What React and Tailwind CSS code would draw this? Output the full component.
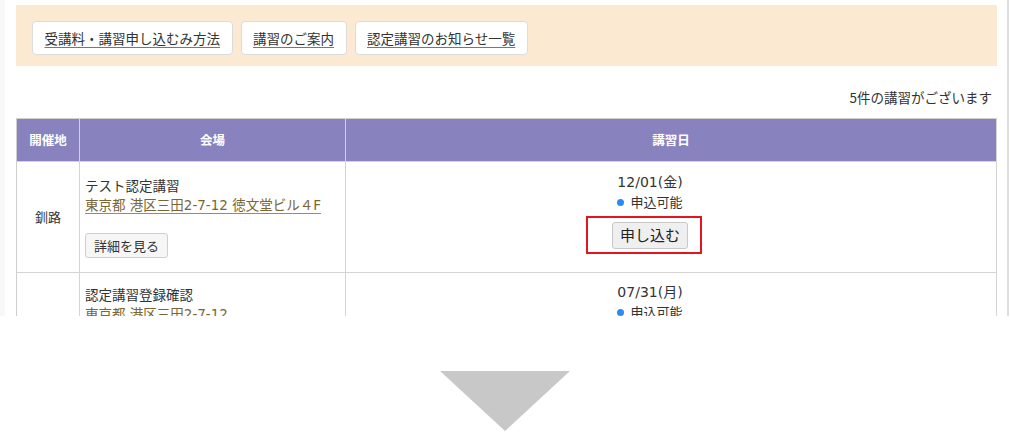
import React from "react";

const font = { fontFamily: '"Noto Sans CJK JP", "Noto Sans", sans-serif' };
const latinWide = { fontFamily: '"DejaVu Sans", "Noto Sans CJK JP", sans-serif' };

function TopButton({ children }) {
  return (
    <div className="h-[34px] px-[11.5px] flex items-center bg-white border border-[#dcdcdc] rounded-[4px] text-[13.5px] text-[#333] underline decoration-[#777] underline-offset-[3px]">
      {children}
    </div>
  );
}

function Status() {
  return (
    <div className="h-[20px] flex items-center justify-center gap-[6px] text-[13px] text-[#333]">
      <span className="w-[7px] h-[7px] rounded-full bg-[#2a8cf0]" />
      <span>申込可能</span>
    </div>
  );
}

export default function App() {
  return (
    <div className="w-[1010px] h-[448px] bg-white overflow-hidden" style={font}>
      <div className="h-[316px] flex overflow-hidden">
        <div className="w-[5px] shrink-0 bg-[#f8f8f8]" />
        <div className="w-[992px] shrink-0 pl-[11px]">
          <div className="mt-[5px] h-[61px] bg-[#fce9d2] flex items-start pt-[16px] pl-[16px] gap-[8px]">
            <TopButton>受講料・講習申し込むみ方法</TopButton>
            <TopButton>講習のご案内</TopButton>
            <TopButton>認定講習のお知らせ一覧</TopButton>
          </div>
          <div className="mt-[21px] h-[20px] leading-[20px] text-right pr-[5px] text-[13.5px] text-[#333]">
            5件の講習がございます
          </div>
          <div className="mt-[11px] grid grid-cols-[63px_266px_1fr] border-l border-t border-[#cfcfcf] text-[13px] text-[#333]">
            <div className="h-[43px] bg-[#8883be] border-r border-b border-[#d4d4d4] flex items-center justify-center text-white font-bold text-[12.5px]">開催地</div>
            <div className="h-[43px] bg-[#8883be] border-r border-b border-[#d4d4d4] flex items-center justify-center text-white font-bold text-[12.5px]">会場</div>
            <div className="h-[43px] bg-[#8883be] border-r border-b border-[#d4d4d4] flex items-center justify-center text-white font-bold text-[12.5px]">講習日</div>

            <div className="h-[111px] border-r border-b border-[#d4d4d4] flex items-center justify-center">釧路</div>
            <div className="h-[111px] border-r border-b border-[#d4d4d4] pl-[5px] pt-[13px]">
              <div className="leading-[20px] text-[13.5px]">テスト認定講習</div>
              <div className="leading-[20px] text-[#7b6535] underline decoration-[#9a8a6a] underline-offset-[3px] text-[13.5px]" style={latinWide}>東京都 港区三田2-7-12 徳文堂ビル４F</div>
              <div className="mt-[18px] inline-flex h-[25px] px-[8px] items-center bg-[#f6f6f6] border border-[#cfcfcf] rounded-[3px] text-[13px]">詳細を見る</div>
            </div>
            <div className="h-[111px] border-r border-b border-[#d4d4d4] pt-[10px] pr-[42px] flex flex-col items-center">
              <div className="h-[20px] leading-[20px] text-[14px]" style={latinWide}>12/01(金)</div>
              <Status />
              <div className="relative mt-[10px]">
                <div className="h-[27px] w-[76px] flex items-center justify-center bg-[#efefef] border border-[#c8c8c8] rounded-[3px] text-[15px] text-[#222]">申し込む</div>
                <div className="absolute left-[-26px] top-[-6px] w-[116px] h-[38px] border-2 border-[#e3161f]" />
              </div>
            </div>

            <div className="h-[60px] border-r border-[#d4d4d4]" />
            <div className="h-[60px] border-r border-[#d4d4d4] pl-[5px] pt-[11px]">
              <div className="leading-[20px] text-[13.5px]">認定講習登録確認</div>
              <div className="leading-[20px] text-[#7b6535] underline decoration-[#9a8a6a] underline-offset-[3px] text-[13.5px]" style={latinWide}>東京都 港区三田2-7-12</div>
            </div>
            <div className="h-[60px] border-r border-[#d4d4d4] pt-[9px] pr-[42px] flex flex-col items-center">
              <div className="h-[20px] leading-[20px] text-[14px]" style={latinWide}>07/31(月)</div>
              <Status />
            </div>
          </div>
        </div>
        <div className="w-[10px] shrink-0" />
        <div className="w-[2px] shrink-0 bg-[#dedede]" />
      </div>
      <div className="flex justify-center pt-[55px]">
        <svg width="130" height="60" viewBox="0 0 130 60">
          <polygon points="0,0 130,0 65,60" fill="#c8c8c8" />
        </svg>
      </div>
    </div>
  );
}
